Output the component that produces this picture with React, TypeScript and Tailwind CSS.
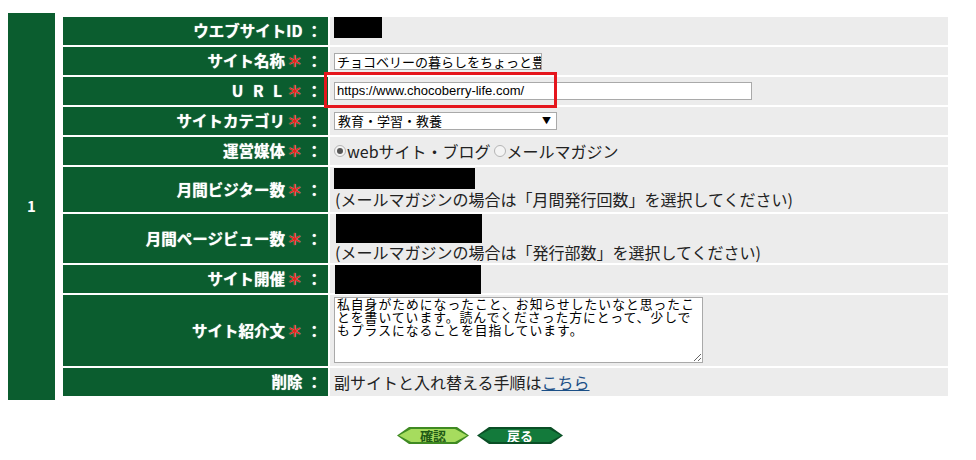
import type { ReactNode } from 'react'

const jp = { fontFamily: '"Noto Sans CJK JP", "Noto Sans", sans-serif' }

function Req() {
  return <span className="ml-[2px] text-[#e8231c] font-bold">＊</span>
}

function Label({ children, req = true }: { children: ReactNode; req?: boolean }) {
  return (
    <div className="flex items-center justify-end bg-[#0b5d2f] pr-[6px] text-[15.5px] font-bold text-white [text-shadow:0_0_1px_#d8e8d8]">
      <span>{children}</span>
      {req && <Req />}
      <span className="ml-[4px]">：</span>
    </div>
  )
}

function Value({ children, className = '' }: { children?: ReactNode; className?: string }) {
  return <div className={`relative flex bg-[#ececec] pl-[4px] text-[16px] text-[#222] ${className}`}>{children}</div>
}

function Radio({ on }: { on?: boolean }) {
  return (
    <span className="mr-[1px] inline-flex h-[12px] w-[12px] items-center justify-center rounded-full border border-[#b5b5b5] bg-[#f4f4f4]">
      {on && <span className="h-[6px] w-[6px] rounded-full bg-[#555]" />}
    </span>
  )
}

function HexButton({ label, light }: { label: string; light?: boolean }) {
  const shape = '[clip-path:polygon(0_50%,12px_0,calc(100%-12px)_0,100%_50%,calc(100%-12px)_100%,12px_100%)]'
  return (
    <div className={`${shape} h-[17px] p-[2px] ${light ? 'w-[72px] bg-[#3f8a22]' : 'w-[86px] bg-[#0a4f26]'}`}>
      <div
        className={`${shape} flex h-full items-center justify-center text-[13px] font-bold ${
          light ? 'bg-[#a6dc5e] text-[#1f5a16]' : 'bg-[#137a3b] text-white'
        }`}
      >
        {label}
      </div>
    </div>
  )
}

export default function App() {
  const intro =
    '私自身がためになったこと、お知らせしたいなと思ったことを書いています。読んでくださった方にとって、少しでもプラスになることを目指しています。'

  return (
    <div className="min-h-[460px] w-[976px] bg-white" style={jp}>
      <div className="flex w-[952px] gap-[4px] pl-[8px] pt-[13px]">
        <div className="flex w-[47px] items-center justify-center bg-[#0b5d2f] text-[15px] font-bold text-white">1</div>

        <div className="p-[4px]">
          <div className="grid grid-cols-[265px_618px] grid-rows-[28px_28px_28px_28px_28px_45px_49px_28px_71px_28px] gap-[2px]">
            <Label req={false}>ウエブサイトID</Label>
            <Value>
              <div className="h-[21px] w-[48px] bg-black" />
            </Value>

            <Label>サイト名称</Label>
            <Value className="items-center">
              <div className="h-[17px] w-[208px] overflow-hidden whitespace-nowrap border border-[#a9a9a9] bg-white pl-[2px] text-[13px] leading-[15px] text-black">
                チョコベリーの暮らしをちょっと豊
              </div>
            </Value>

            <div className="flex items-center justify-end bg-[#0b5d2f] pr-[6px] text-[15.5px] font-bold text-white [text-shadow:0_0_1px_#d8e8d8]">
              <span className="tracking-[3px]">U R L</span>
              <Req />
              <span className="ml-[4px]">：</span>
            </div>
            <Value className="items-center">
              <div className="h-[18px] w-[418px] border border-[#a9a9a9] bg-white pl-[2px] text-[13px] leading-[16px] text-black" style={{ fontFamily: '"Liberation Sans", Arial, sans-serif' }}>
                https://www.chocoberry-life.com/
              </div>
              <div className="absolute left-[-6px] top-[-5px] z-10 h-[36px] w-[233px] border-[3px] border-[#e5161d]" />
            </Value>

            <Label>サイトカテゴリ</Label>
            <Value className="items-center">
              <div className="flex h-[18px] w-[223px] items-center justify-between border border-[#a9a9a9] bg-white pl-[3px] pr-[5px] text-[13px] text-black">
                <span>教育・学習・教養</span>
                <span className="text-[9px]">▼</span>
              </div>
            </Value>

            <Label>運営媒体</Label>
            <Value className="items-center">
              <Radio on />
              <span>webサイト・ブログ</span>
              <span className="ml-[3px]" />
              <Radio />
              <span>メールマガジン</span>
            </Value>

            <Label>月間ビジター数</Label>
            <Value className="flex-col items-start pl-0">
              <div className="mt-[1px] h-[21px] w-[141px] bg-black" />
              <div className="pl-[1px] leading-[21px]">(メールマガジンの場合は「月間発行回数」を選択してください)</div>
            </Value>

            <Label>月間ページビュー数</Label>
            <Value className="flex-col items-start pl-0">
              <div className="ml-[2px] h-[29px] w-[146px] bg-black" />
              <div className="pl-[1px] leading-[18px]">(メールマガジンの場合は「発行部数」を選択してください)</div>
            </Value>

            <Label>サイト開催</Label>
            <Value className="pl-0">
              <div className="ml-[1px] h-[29px] w-[146px] bg-black" />
            </Value>

            <Label>サイト紹介文</Label>
            <Value className="items-start pt-[2px]">
              <textarea
                readOnly
                value={intro}
                className="h-[66px] w-[369px] resize-y border border-[#a9a9a9] bg-white px-[2px] pt-0 text-[12.8px] leading-[12.8px] tracking-[1px] text-black outline-none"
                style={jp}
              />
            </Value>

            <Label req={false}>削除</Label>
            <Value className="items-center">
              <span>副サイトと入れ替える手順は</span>
              <span className="text-[#1b4f86] underline">こちら</span>
            </Value>
          </div>
        </div>
      </div>

      <div className="mt-[27px] flex w-[952px] justify-center gap-[8px] pl-[8px]">
        <HexButton label="確認" light />
        <HexButton label="戻る" />
      </div>
    </div>
  )
}
